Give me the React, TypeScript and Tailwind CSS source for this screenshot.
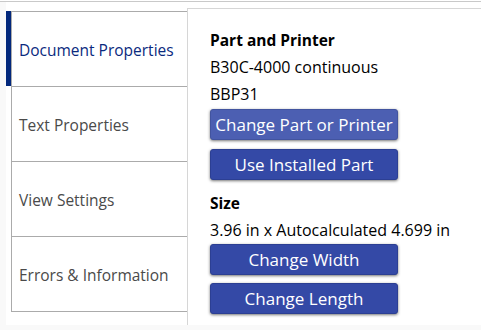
const tabs = [
  { label: 'Document Properties', active: true },
  { label: 'Text Properties', active: false },
  { label: 'View Settings', active: false },
  { label: 'Errors & Information', active: false },
]

function Btn({ label, light }: { label: string; light?: boolean }) {
  return (
    <button
      className={
        'w-[188px] h-[31px] rounded-[3px] text-white text-[17px] leading-none border shadow-[0_1px_3px_rgba(0,0,0,0.55)] ' +
        (light ? 'bg-[#4c5fb2] border-[#42549f]' : 'bg-[#3449a6] border-[#2c3f93]')
      }
    >
      {label}
    </button>
  )
}

export default function App() {
  return (
    <div className="w-[481px] h-[330px] bg-[#f9f9f9] overflow-hidden font-['Open_Sans',sans-serif]">
      <div className="h-[2px] bg-white border-b border-[#c9c9c9]" />
      <div className="flex h-[323px] bg-white">
        <div className="w-[6px] bg-[#f9f9f9]" />
        <div className="w-[181px] pt-[9px]">
          {tabs.map((t) => (
            <div key={t.label} className="flex h-[75px]">
              <div className={'w-[5px] ' + (t.active ? 'bg-[#03287c]' : '')} />
              <div
                className={
                  'flex-1 flex items-center pl-[7px] pt-[3px] border-t border-l border-[#ababab] text-[15.5px] ' +
                  (t.active ? 'text-[#0a2a7e]' : 'text-[#4a4a4a]')
                }
              >
                {t.label}
              </div>
            </div>
          ))}
          <div className="ml-[5px] border-t border-[#ababab]" />
        </div>
        <div className="flex-1 mt-[6px] border-t border-l border-[#d6d6d6] pl-[22px] pt-[18px] text-[16px] text-black">
          <div className="leading-[27px] font-bold text-[15.5px]">Part and Printer</div>
          <div className="leading-[27px]">B30C-4000 continuous</div>
          <div className="leading-[27px]">BBP31</div>
          <div className="flex flex-col gap-[9px] mt-px">
            <Btn label="Change Part or Printer" light />
            <Btn label="Use Installed Part" />
          </div>
          <div className="leading-[27px] font-bold text-[15.5px] mt-[10px]">Size</div>
          <div className="leading-[27px]">3.96 in x Autocalculated 4.699 in</div>
          <div className="flex flex-col gap-[8px]">
            <Btn label="Change Width" />
            <Btn label="Change Length" />
          </div>
        </div>
      </div>
    </div>
  )
}
